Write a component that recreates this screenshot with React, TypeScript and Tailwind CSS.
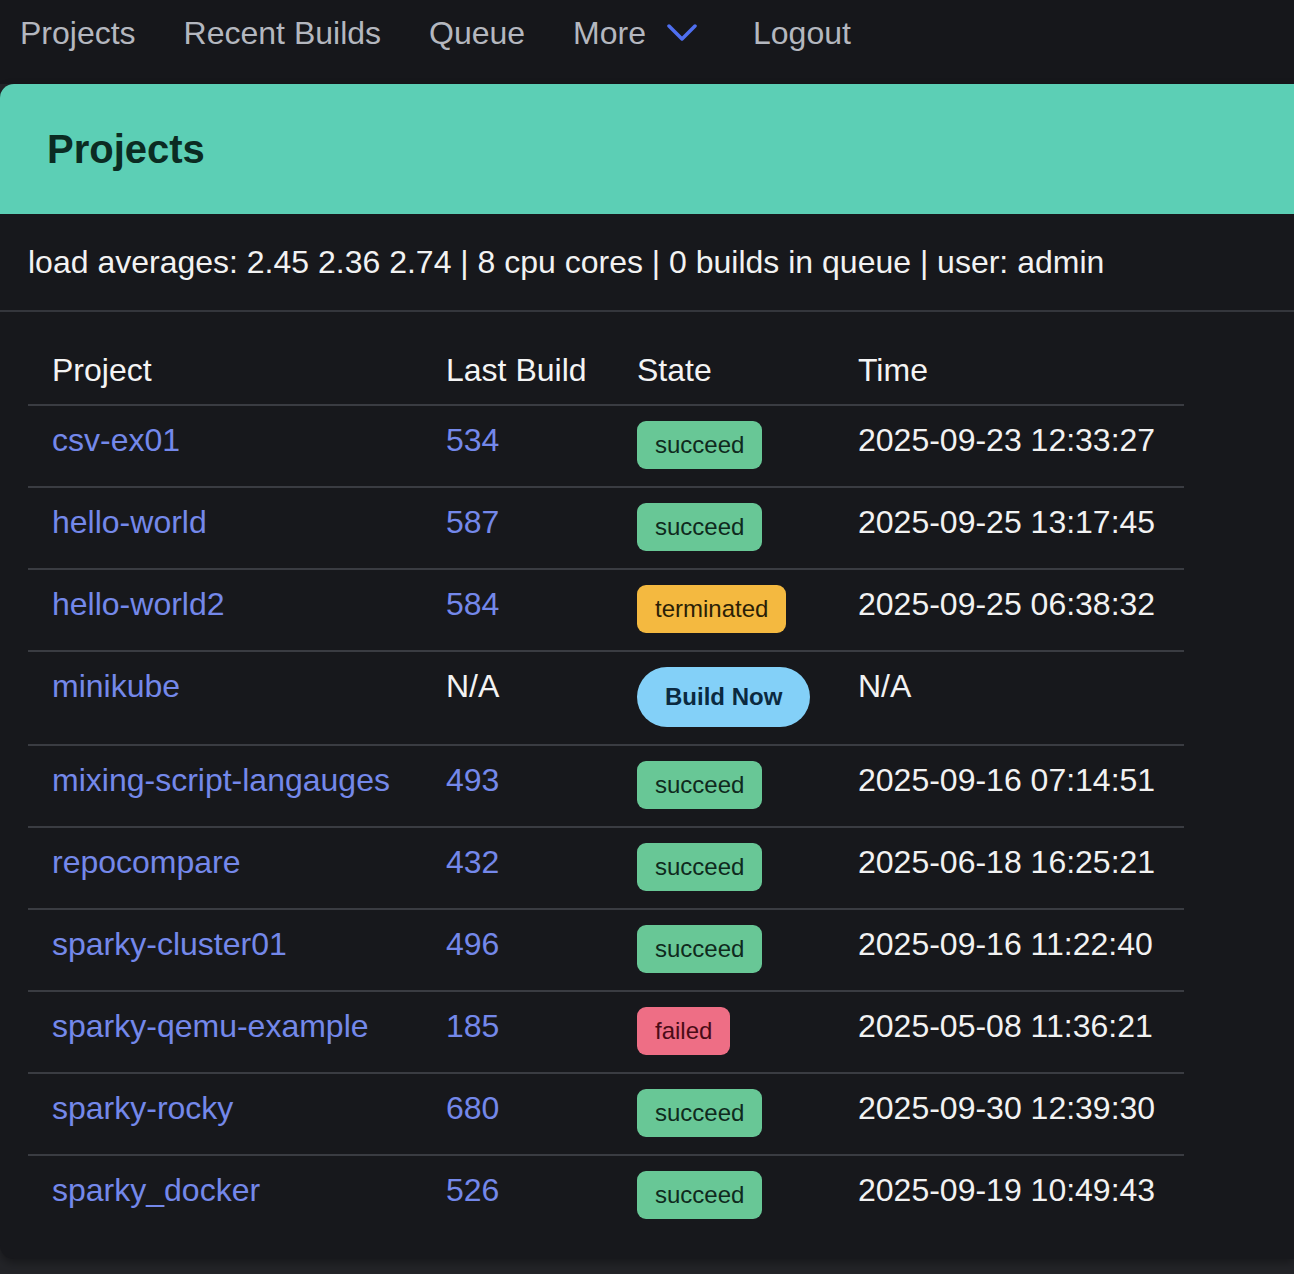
import React from "react";

type Row = {
  name: string;
  build: string;
  state: "succeed" | "terminated" | "failed" | "none";
  time: string;
};

const rows: Row[] = [
  { name: "csv-ex01", build: "534", state: "succeed", time: "2025-09-23 12:33:27" },
  { name: "hello-world", build: "587", state: "succeed", time: "2025-09-25 13:17:45" },
  { name: "hello-world2", build: "584", state: "terminated", time: "2025-09-25 06:38:32" },
  { name: "minikube", build: "N/A", state: "none", time: "N/A" },
  { name: "mixing-script-langauges", build: "493", state: "succeed", time: "2025-09-16 07:14:51" },
  { name: "repocompare", build: "432", state: "succeed", time: "2025-06-18 16:25:21" },
  { name: "sparky-cluster01", build: "496", state: "succeed", time: "2025-09-16 11:22:40" },
  { name: "sparky-qemu-example", build: "185", state: "failed", time: "2025-05-08 11:36:21" },
  { name: "sparky-rocky", build: "680", state: "succeed", time: "2025-09-30 12:39:30" },
  { name: "sparky_docker", build: "526", state: "succeed", time: "2025-09-19 10:49:43" },
];

const tagStyles = {
  succeed: "bg-[#68c796] text-[#0f2a1d]",
  terminated: "bg-[#f4b940] text-[#2b1f06]",
  failed: "bg-[#ee6e85] text-[#4a0b16]",
};

function StateCell({ state }: { state: Row["state"] }) {
  if (state === "none") {
    return (
      <button className="inline-flex h-[60px] items-center whitespace-nowrap rounded-full bg-[#83d0f8] px-[28px] text-[24px] leading-none font-semibold text-[#0b2a40] align-top">
        Build Now
      </button>
    );
  }
  return (
    <span className={`inline-flex h-[48px] items-center whitespace-nowrap rounded-[9px] px-[18px] text-[24px] leading-none align-top ${tagStyles[state]}`}>
      {state}
    </span>
  );
}

export default function App() {
  return (
    <div className="min-h-screen bg-[#232428] font-['Liberation_Sans',Arial,sans-serif] overflow-hidden">
      {/* top nav */}
      <nav className="flex h-[84px] items-start gap-[48px] bg-[#16171b] pl-[20px] pt-[9px] text-[32px] leading-[48px] text-[#b4b7bf]">
        <a href="#">Projects</a>
        <a href="#">Recent Builds</a>
        <a href="#">Queue</a>
        <a href="#" className="flex items-center">
          More
          <svg className="ml-[21px] mr-[8px] h-[18px] w-[30px]" viewBox="0 0 30 18" fill="none">
            <path d="M2 2 L15 15 L28 2" stroke="#4f6ff0" strokeWidth="3.5" strokeLinecap="round" strokeLinejoin="round" />
          </svg>
        </a>
        <a href="#">Logout</a>
      </nav>

      {/* card */}
      <div className="rounded-l-[14px] bg-[#17181c] shadow-[0_4px_10px_rgba(0,0,0,0.35)]">
        <div className="flex h-[130px] items-center rounded-tl-[14px] bg-[#5ccfb5] pl-[47px]">
          <h1 className="text-[40px] font-bold text-[#0b2b22]">Projects</h1>
        </div>

        <div className="border-b-2 border-[#34363c] py-[24px] pl-[28px] text-[32px] leading-[48px] text-[#f2f2f2]">
          load averages: 2.45 2.36 2.74 | 8 cpu cores | 0 builds in queue | user: admin
        </div>

        <div className="pb-[23px] pl-[28px] pt-[24px]">
          <table className="w-[1156px] table-fixed border-collapse text-[32px] leading-[36px]">
            <colgroup>
              <col className="w-[394px]" />
              <col className="w-[191px]" />
              <col className="w-[221px]" />
              <col className="w-[350px]" />
            </colgroup>
            <thead>
              <tr className="border-b-2 border-[#3a3c42] text-left text-[#f4f4f4]">
                <th className="px-[24px] py-[16px] font-normal">Project</th>
                <th className="px-[24px] py-[16px] font-normal whitespace-nowrap">Last Build</th>
                <th className="px-[24px] py-[16px] font-normal">State</th>
                <th className="px-[24px] py-[16px] font-normal">Time</th>
              </tr>
            </thead>
            <tbody>
              {rows.map((r, i) => (
                <tr key={r.name} className={i < rows.length - 1 ? "border-b-2 border-[#3a3c42]" : ""}>
                  <td className="px-[24px] pt-[16px] align-top">
                    <a href="#" className="text-[#7488ea] whitespace-nowrap">{r.name}</a>
                  </td>
                  <td className="px-[24px] pt-[16px] align-top">
                    {r.build === "N/A" ? (
                      <span className="text-[#f2f2f2]">N/A</span>
                    ) : (
                      <a href="#" className="text-[#7488ea]">{r.build}</a>
                    )}
                  </td>
                  <td className="px-[24px] pt-[15px] pb-[17px] align-top">
                    <StateCell state={r.state} />
                  </td>
                  <td className="px-[24px] pt-[16px] align-top text-[#f2f2f2] whitespace-nowrap">{r.time}</td>
                </tr>
              ))}
            </tbody>
          </table>
        </div>
      </div>
    </div>
  );
}
